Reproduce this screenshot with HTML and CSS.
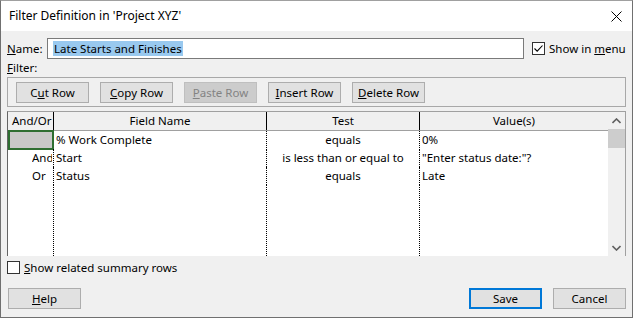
FILE: index.html
```html
<!DOCTYPE html>
<html lang="en">
<head>
    <meta charset="UTF-8">
    <meta name="viewport" content="width=device-width, initial-scale=1.0">
    <title>Filter Definition</title>
    <link rel="stylesheet" href="styles.css">
</head>
<body>
    <div class="window">
        <div class="titlebar">
            <span class="title">Filter Definition in 'Project XYZ'</span>
            <svg class="close" width="11" height="11" viewBox="0 0 11 11">
                <path d="M0.5 0.5 L10.5 10.5 M10.5 0.5 L0.5 10.5" stroke="#000" stroke-width="1"/>
            </svg>
        </div>
        <div class="content">
            <div class="name-row">
                <label class="name-label"><u>N</u>ame:</label>
                <div class="text-input"><span class="selected">Late Starts and Finishes</span></div>
                <label class="check">
                    <span class="box checked">
                        <svg width="11" height="11" viewBox="0 0 11 11">
                            <path d="M1.5 5.5 L4.2 8.2 L9.5 2.5" fill="none" stroke="#000" stroke-width="1.1"/>
                        </svg>
                    </span>
                    <span class="check-text">Show in <u>m</u>enu</span>
                </label>
            </div>
            <div class="filter-label"><u>F</u>ilter:</div>
            <div class="toolbar">
                <button class="btn">C<u>u</u>t Row</button>
                <button class="btn"><u>C</u>opy Row</button>
                <button class="btn disabled"><u>P</u>aste Row</button>
                <button class="btn"><u>I</u>nsert Row</button>
                <button class="btn"><u>D</u>elete Row</button>
            </div>
            <div class="grid">
                <div class="grid-main">
                    <div class="row head">
                        <div class="cell c-andor">And/Or</div>
                        <div class="cell c-field center">Field Name</div>
                        <div class="cell c-test center">Test</div>
                        <div class="cell c-value center">Value(s)</div>
                    </div>
                    <div class="body">
                        <div class="row">
                            <div class="cell c-andor current"></div>
                            <div class="cell c-field">% Work Complete</div>
                            <div class="cell c-test center">equals</div>
                            <div class="cell c-value">0%</div>
                        </div>
                        <div class="row">
                            <div class="cell c-andor op"><span class="clip">And</span></div>
                            <div class="cell c-field">Start</div>
                            <div class="cell c-test center">is less than or equal to</div>
                            <div class="cell c-value">"Enter status date:"?</div>
                        </div>
                        <div class="row">
                            <div class="cell c-andor op"><span class="clip">Or</span></div>
                            <div class="cell c-field">Status</div>
                            <div class="cell c-test center">equals</div>
                            <div class="cell c-value">Late</div>
                        </div>
                        <div class="row filler">
                            <div class="cell c-andor"></div>
                            <div class="cell c-field"></div>
                            <div class="cell c-test"></div>
                            <div class="cell c-value"></div>
                        </div>
                    </div>
                </div>
                <div class="scrollbar">
                    <svg class="arrow" width="9" height="6" viewBox="0 0 9 6">
                        <path d="M0.5 5 L4.5 1 L8.5 5" fill="none" stroke="#606060" stroke-width="1.6"/>
                    </svg>
                    <div class="thumb"></div>
                    <div class="track"></div>
                    <svg class="arrow" width="9" height="6" viewBox="0 0 9 6">
                        <path d="M0.5 1 L4.5 5 L8.5 1" fill="none" stroke="#606060" stroke-width="1.6"/>
                    </svg>
                </div>
            </div>
            <label class="check summary">
                <span class="box"></span>
                <span class="check-text"><u>S</u>how related summary rows</span>
            </label>
            <div class="footer">
                <button class="btn"><u>H</u>elp</button>
                <div class="spacer"></div>
                <button class="btn default">Save</button>
                <button class="btn">Cancel</button>
            </div>
        </div>
    </div>
</body>
</html>
```

FILE: styles.css
```css
body {
    margin: 0;
    padding: 0;
    font-family: "Noto Sans", "Open Sans", sans-serif;
    font-size: 11.5px;
    color: #000;
    background-color: #fff;
}
.window {
    width: 633px;
    height: 318px;
    box-sizing: border-box;
    border: 1px solid #707070;
    border-top-color: #a0a0a0;
    background-color: #f0f0f0;
    display: flex;
    flex-direction: column;
}
.titlebar {
    height: 30px;
    background-color: #fff;
    display: flex;
    align-items: center;
    padding: 0 10px 0 8px;
    flex-shrink: 0;
}
.title {
    flex: 1;
    font-size: 12px;
    padding-bottom: 1px;
}
.close {
    display: block;
}
.content {
    flex: 1;
    padding: 7px 6px 0 6px;
    display: flex;
    flex-direction: column;
}
.name-row {
    display: flex;
    align-items: center;
    height: 21px;
}
.name-label {
    width: 40px;
}
.text-input {
    width: 477px;
    height: 21px;
    box-sizing: border-box;
    border: 1px solid #7a7a7a;
    background-color: #fff;
    padding: 0 0 0 5px;
    display: flex;
    align-items: center;
}
.selected {
    background-color: #99c9ef;
    padding: 0 1px;
    line-height: 15px;
}
.check {
    display: flex;
    align-items: center;
    gap: 4px;
}
.check-text {
    white-space: nowrap;
}
.name-row .check {
    margin-left: 8px;
}
.box {
    width: 13px;
    height: 13px;
    box-sizing: border-box;
    border: 1px solid #333;
    background-color: #fff;
    display: flex;
    align-items: center;
    justify-content: center;
}
.filter-label {
    height: 18px;
    line-height: 18px;
}
.toolbar {
    height: 30px;
    box-sizing: border-box;
    border: 1px solid #a8a8a8;
    padding: 4px 8px 0 8px;
    display: flex;
    gap: 11px;
    margin-bottom: 4px;
}
.btn {
    width: 73px;
    height: 21px;
    box-sizing: border-box;
    border: 1px solid #adadad;
    background-color: #e1e1e1;
    font-family: inherit;
    font-size: 11.5px;
    color: #000;
    padding: 0;
}
.btn.disabled {
    background-color: #cccccc;
    border-color: #bfbfbf;
    color: #838383;
}
.btn.default {
    border: 2px solid #0078d7;
}
.grid {
    height: 145px;
    box-sizing: border-box;
    border-top: 1px solid #a0a0a0;
    border-left: 1px solid #646464;
    border-right: 1px solid #a0a0a0;
    display: flex;
    background-color: #fff;
}
.grid-main {
    flex: 1;
    display: flex;
    flex-direction: column;
}
.row {
    display: grid;
    grid-template-columns: 46px 213px 153px 1fr;
    height: 18px;
}
.row.head {
    background-color: #f0f0f0;
    border-bottom: 1px solid #a0a0a0;
}
.body {
    flex: 1;
    display: flex;
    flex-direction: column;
}
.row.filler {
    flex: 1;
}
.cell {
    line-height: 18px;
    white-space: nowrap;
    overflow: hidden;
    padding-left: 2px;
    box-sizing: border-box;
    border-right: 1px dotted #000;
}
.head .cell {
    border-right: 1px solid #000;
}
.c-value,
.head .c-value {
    border-right: none;
}
.head .c-andor {
    padding-left: 4px;
}
.center {
    text-align: center;
    padding-left: 0;
}
.op {
    padding-left: 24px;
}
.clip {
    display: inline-block;
    max-width: 20px;
    overflow: hidden;
    vertical-align: top;
}
.current {
    background-color: #c8c8c8;
    border: 2px solid #2e6e31;
    margin-top: -1px;
    height: 20px;
    width: 46px;
}
.scrollbar {
    width: 17px;
    background-color: #f0f0f0;
    display: flex;
    flex-direction: column;
    align-items: center;
}
.arrow {
    margin: 6px 0 5px;
    flex-shrink: 0;
}
.thumb {
    width: 17px;
    height: 19px;
    background-color: #cdcdcd;
}
.track {
    flex: 1;
}
.summary {
    margin-top: 5px;
    height: 13px;
}
.footer {
    display: flex;
    gap: 11px;
    margin-top: 14px;
    padding-left: 1px;
}
.spacer {
    flex: 1;
}
```
